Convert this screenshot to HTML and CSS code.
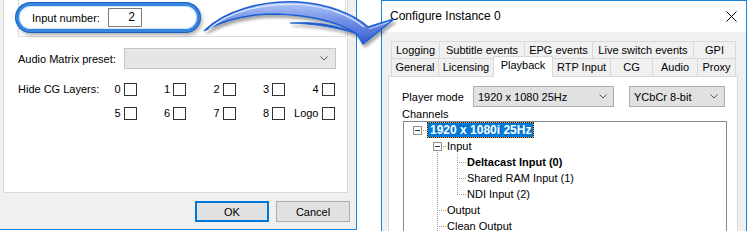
FILE: index.html
```html
<!DOCTYPE html>
<html>
<head>
<meta charset="utf-8">
<link rel="stylesheet" href="styles.css">
</head>
<body>
<div class="stage">
  <section class="left">
    <div class="panel">
      <div class="group"></div>
      <div class="row audio">
        <span class="lbl lbl-audio">Audio Matrix preset:</span>
        <div class="select sel-audio disabled"><span class="sel-text"></span><svg class="chev" width="8" height="5" viewBox="0 0 8 5"><path d="M0.5 0.5 L4 4 L7.5 0.5" fill="none" stroke="#555" stroke-width="1"/></svg></div>
      </div>
      <div class="row cg">
        <span class="lbl lbl-cg">Hide CG Layers:</span>
        <div class="cg-grid">
          <label class="cb">0<span class="box"></span></label>
          <label class="cb">1<span class="box"></span></label>
          <label class="cb">2<span class="box"></span></label>
          <label class="cb">3<span class="box"></span></label>
          <label class="cb">4<span class="box"></span></label>
          <label class="cb">5<span class="box"></span></label>
          <label class="cb">6<span class="box"></span></label>
          <label class="cb">7<span class="box"></span></label>
          <label class="cb">8<span class="box"></span></label>
          <label class="cb">Logo<span class="box"></span></label>
        </div>
      </div>
    </div>
    <div class="buttons">
      <button class="btn default">OK</button>
      <button class="btn">Cancel</button>
    </div>
  </section>
  <div class="gap"></div>
  <section class="right">
    <div class="titlebar">
      <span class="title">Configure Instance 0</span>
      <svg class="close" width="11" height="11" viewBox="0 0 11 11"><path d="M0.5 0.5 L10.5 10.5 M10.5 0.5 L0.5 10.5" stroke="#000" stroke-width="1"/></svg>
    </div>
    <div class="dlg-body">
      <div class="tabs">
        <div class="tabrow r1">
          <span class="tab">Logging</span>
          <span class="tab">Subtitle events</span>
          <span class="tab">EPG events</span>
          <span class="tab">Live switch events</span>
          <span class="tab">GPI</span>
        </div>
        <div class="tabrow r2">
          <span class="tab">General</span>
          <span class="tab">Licensing</span>
          <span class="tab active">Playback</span>
          <span class="tab">RTP Input</span>
          <span class="tab">CG</span>
          <span class="tab">Audio</span>
          <span class="tab">Proxy</span>
        </div>
      </div>
      <div class="tabpanel">
        <div class="pm-row">
          <span class="lbl lbl-pm">Player mode</span>
          <div class="select sel-mode"><span class="sel-text">1920 x 1080 25Hz</span><svg class="chev" width="8" height="5" viewBox="0 0 8 5"><path d="M0.5 0.5 L4 4 L7.5 0.5" fill="none" stroke="#555" stroke-width="1"/></svg></div>
          <div class="select sel-color"><span class="sel-text">YCbCr 8-bit</span><svg class="chev" width="8" height="5" viewBox="0 0 8 5"><path d="M0.5 0.5 L4 4 L7.5 0.5" fill="none" stroke="#555" stroke-width="1"/></svg></div>
        </div>
        <div class="lbl channels">Channels</div>
        <div class="tree">
          <div class="trow">
            <span class="ind exp"><span class="pm"></span></span>
            <span class="node selected">1920 x 1080i 25Hz</span>
          </div>
          <div class="trow">
            <span class="ind"></span>
            <span class="ind exp below"><span class="pm"></span></span>
            <span class="node">Input</span>
          </div>
          <div class="trow">
            <span class="ind"></span><span class="ind v"></span><span class="ind tee"></span>
            <span class="node bold">Deltacast Input (0)</span>
          </div>
          <div class="trow">
            <span class="ind"></span><span class="ind v"></span><span class="ind tee"></span>
            <span class="node">Shared RAM Input (1)</span>
          </div>
          <div class="trow">
            <span class="ind"></span><span class="ind v"></span><span class="ind elbow"></span>
            <span class="node">NDI Input (2)</span>
          </div>
          <div class="trow">
            <span class="ind"></span><span class="ind tee"></span>
            <span class="node">Output</span>
          </div>
          <div class="trow">
            <span class="ind"></span><span class="ind tee"></span>
            <span class="node">Clean Output</span>
          </div>
        </div>
      </div>
    </div>
  </section>
</div>

<div class="callout">
  <span class="callout-lbl">Input number:</span>
  <span class="numbox">2</span>
</div>

<svg class="arrow" width="756" height="231" viewBox="0 0 756 231">
  <defs>
    <linearGradient id="ag" x1="0" y1="0" x2="0" y2="1">
      <stop offset="0" stop-color="#b3c8f6"/>
      <stop offset="0.45" stop-color="#7290e8"/>
      <stop offset="1" stop-color="#3558cc"/>
    </linearGradient>
    <filter id="sh" x="-10%" y="-20%" width="130%" height="160%">
      <feGaussianBlur in="SourceAlpha" stdDeviation="1.5"/>
      <feOffset dx="1.5" dy="2.5" result="b"/>
      <feComponentTransfer><feFuncA type="linear" slope="0.35"/></feComponentTransfer>
      <feMerge><feMergeNode/><feMergeNode in="SourceGraphic"/></feMerge>
    </filter>
  </defs>
  <g filter="url(#sh)">
    <path d="M204,31 C224,11 262,0 298,2 C328,4 354,14 368,27 L394,19 L363,44 L357,34 C340,23 312,15 275,14 C248,14 224,20 204,31 Z" fill="url(#ag)" stroke="#1a5fd0" stroke-width="1.4" stroke-linejoin="miter"/>
    <path d="M290,23 C312,21 336,24 357,34 C336,27 314,24 290,23 Z" fill="#2f55c8" stroke="#1a5fd0" stroke-width="0.8"/>
    <path d="M209,29 C230,11 264,3 298,4.5 C326,6 350,15 364,27" fill="none" stroke="#e6f0ff" stroke-width="1.2" opacity="0.9"/>
    <path d="M369,29 L389,22" fill="none" stroke="#d0e2ff" stroke-width="1" opacity="0.8"/>
  </g>
</svg>
</body>
</html>
```

FILE: styles.css
```css
html, body {
  margin: 0;
  padding: 0;
}
body {
  width: 756px;
  height: 231px;
  overflow: hidden;
  background: #ffffff;
  font-family: "Liberation Sans", Arial, sans-serif;
  font-size: 11px;
  color: #000;
  position: relative;
}

.stage {
  display: flex;
  height: 231px;
}

/* ---------- left dialog ---------- */
.left {
  width: 357px;
  height: 230px;
  box-sizing: border-box;
  background: #f0f0f0;
  border-right: 1px solid #1a82d8;
  border-bottom: 1px solid #1a82d8;
  display: flex;
  flex-direction: column;
  flex: none;
}
.panel {
  margin: -1px 0 0 3px;
  width: 345px;
  height: 194px;
  box-sizing: border-box;
  background: #fff;
  border: 1px solid #d9d9d9;
  display: flex;
  flex-direction: column;
}
.group {
  margin-left: 14px;
  width: 328px;
  height: 37px;
  box-sizing: border-box;
  border: 1px solid #dcdcdc;
  border-top: none;
  flex: none;
}
.row {
  display: flex;
  padding-left: 14px;
}
.lbl {
  white-space: nowrap;
}
.audio {
  margin-top: 11px;
  height: 21px;
  align-items: center;
}
.lbl-audio {
  width: 106px;
  flex: none;
}
.select {
  box-sizing: border-box;
  height: 21px;
  border: 1px solid #adadad;
  background: #e1e1e1;
  display: flex;
  align-items: center;
  justify-content: space-between;
  padding: 0 6px 0 4px;
  white-space: nowrap;
}
.select.disabled {
  background: #e6e6e6;
  border-color: #c4c4c4;
}
.sel-audio {
  width: 212px;
  padding-right: 7px;
}
.chev {
  display: block;
  flex: none;
}

.cg {
  margin-top: 14px;
  align-items: flex-start;
}
.lbl-cg {
  width: 69px;
  flex: none;
  line-height: 13px;
}
.cg-grid {
  display: grid;
  grid-template-columns: repeat(5, 49.5px);
  row-gap: 11px;
}
.cb {
  display: flex;
  justify-content: flex-end;
  align-items: center;
  gap: 3px;
  height: 13px;
  line-height: 13px;
}
.box {
  width: 13px;
  height: 13px;
  box-sizing: border-box;
  border: 1px solid #333;
  background: #fff;
  flex: none;
}

.buttons {
  display: flex;
  justify-content: flex-end;
  gap: 7px;
  margin-top: 8px;
  padding-right: 6px;
}
.btn {
  width: 74px;
  height: 21px;
  box-sizing: border-box;
  background: #e1e1e1;
  border: 1px solid #adadad;
  font-family: "Liberation Sans", Arial, sans-serif;
  font-size: 11px;
  color: #000;
  padding: 0;
  margin: 0;
}
.btn.default {
  border: 2px solid #0078d7;
}

.gap {
  width: 24px;
  flex: none;
}

/* ---------- right dialog ---------- */
.right {
  width: 366px;
  height: 231px;
  box-sizing: border-box;
  border: 1px solid #1a82d8;
  border-bottom: none;
  display: flex;
  flex-direction: column;
  flex: none;
}
.titlebar {
  height: 31px;
  flex: none;
  background: #fff;
  display: flex;
  align-items: center;
  justify-content: space-between;
  padding: 0 9px 0 8px;
}
.title {
  font-size: 12px;
  margin-top: -1px;
}
.close {
  display: block;
  margin-top: -1px;
}
.dlg-body {
  flex: 1;
  background: #f0f0f0;
  padding: 9px 8px 0 6px;
  display: flex;
  flex-direction: column;
  min-height: 0;
}
.tabs {
  margin-left: 3px;
  margin-right: 1px;
}
.tabrow {
  display: grid;
}
.r1 {
  grid-template-columns: 49px 85px 68px 101px 42px;
  height: 17px;
}
.r2 {
  grid-template-columns: 48px 55px 59px 58px 42px 45px 38px;
  height: 18px;
}
.tab {
  box-sizing: border-box;
  border-top: 1px solid #d9d9d9;
  border-right: 1px solid #d9d9d9;
  background: #f0f0f0;
  text-align: center;
  white-space: nowrap;
  line-height: 16px;
}
.r2 .tab {
  line-height: 17px;
}
.tab:first-child {
  border-left: 1px solid #d9d9d9;
}
.tab.active {
  position: relative;
  z-index: 1;
  background: #fff;
  border-left: 1px solid #d9d9d9;
  margin: -2px 0 -1px -1px;
  line-height: 16px;
}
.tabpanel {
  flex: 1;
  background: #fff;
  border: 1px solid #d9d9d9;
  border-bottom: none;
  padding-left: 13px;
  display: flex;
  flex-direction: column;
  min-height: 0;
}
.pm-row {
  display: flex;
  align-items: center;
  margin-top: 9px;
  height: 21px;
}
.lbl-pm {
  width: 71px;
  flex: none;
}
.sel-mode {
  width: 141px;
}
.sel-color {
  width: 96px;
  margin-left: 15px;
}
.channels {
  line-height: 14px;
  height: 14px;
}
.tree {
  flex: 1;
  margin-left: 1px;
  width: 324px;
  box-sizing: border-box;
  border: 1px solid #828790;
  border-bottom: none;
  background: #fff;
  padding-left: 3px;
}
.trow {
  display: flex;
  height: 16px;
  align-items: center;
}
.ind {
  width: 20px;
  height: 16px;
  flex: none;
  display: flex;
  align-items: flex-start;
}
.ind.v {
  background: repeating-linear-gradient(to bottom, #a0a0a0 0 1px, transparent 1px 2px) no-repeat 10px 0 / 1px 16px;
}
.ind.tee {
  background:
    repeating-linear-gradient(to bottom, #a0a0a0 0 1px, transparent 1px 2px) no-repeat 10px 0 / 1px 16px,
    repeating-linear-gradient(to right, #a0a0a0 0 1px, transparent 1px 2px) no-repeat 12px 8px / 8px 1px;
}
.ind.elbow {
  background:
    repeating-linear-gradient(to bottom, #a0a0a0 0 1px, transparent 1px 2px) no-repeat 10px 0 / 1px 9px,
    repeating-linear-gradient(to right, #a0a0a0 0 1px, transparent 1px 2px) no-repeat 12px 8px / 8px 1px;
}
.ind.exp {
  background: repeating-linear-gradient(to right, #a0a0a0 0 1px, transparent 1px 2px) no-repeat 16px 8px / 4px 1px;
}
.ind.exp.below {
  background:
    repeating-linear-gradient(to right, #a0a0a0 0 1px, transparent 1px 2px) no-repeat 16px 8px / 4px 1px,
    repeating-linear-gradient(to bottom, #a0a0a0 0 1px, transparent 1px 2px) no-repeat 10px 14px / 1px 2px;
}
.pm {
  width: 9px;
  height: 9px;
  box-sizing: border-box;
  margin: 4px 0 0 6px;
  border: 1px solid #919191;
  background: linear-gradient(#333, #333) no-repeat center / 5px 1px, #fff;
}
.node {
  white-space: nowrap;
  line-height: 16px;
}
.node.selected {
  box-sizing: border-box;
  height: 16px;
  line-height: 14px;
  padding: 0 2px;
  color: #fff;
  font-weight: bold;
  font-size: 12px;
  border: 1px dotted #1a1a1a;
  background: linear-gradient(#0078d7, #0078d7) padding-box, #e2b44a border-box;
}
.node.bold {
  font-weight: bold;
}

/* ---------- annotation overlay ---------- */
.callout {
  position: absolute;
  left: 16px;
  top: 3px;
  width: 184px;
  height: 29px;
  box-sizing: border-box;
  border: 3px solid #3585de;
  border-radius: 15px;
  background: #fff;
  box-shadow: 0 0 0 1px #1a5fbf, inset 0 0 0 1px #c8e4ff, 2px 3px 4px rgba(0, 0, 0, 0.35);
  display: flex;
  align-items: center;
  padding-left: 13px;
}
.callout-lbl {
  width: 76px;
  flex: none;
}
.numbox {
  width: 34px;
  height: 19px;
  box-sizing: border-box;
  border: 1px solid #7a7a7a;
  background: #fff;
  text-align: right;
  padding-right: 6px;
  line-height: 17px;
  font-size: 12px;
}
.arrow {
  position: absolute;
  left: 0;
  top: 0;
  pointer-events: none;
}
```
